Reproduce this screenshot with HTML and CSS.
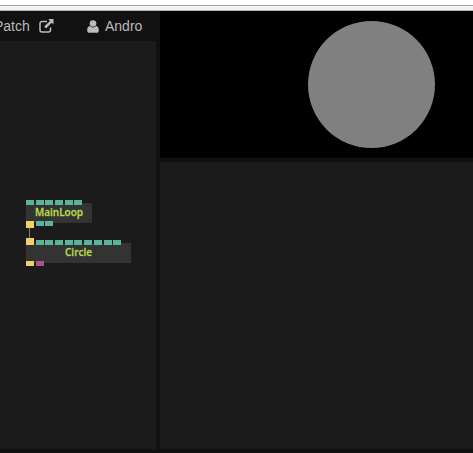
FILE: index.html
```html
<!DOCTYPE html>
<html lang="en">
<head>
<meta charset="utf-8">
<title>Patch editor</title>
<link rel="stylesheet" href="styles.css">
</head>
<body>
<div class="browser-edge"></div>
<main class="workspace">
  <section class="editor">
    <nav class="toolbar">
      <a class="patch"><span class="patch-label">Patch</span>
        <svg class="share" viewBox="0 0 15 14"><path d="M8 2.5H3a2 2 0 0 0-2 2V11a2 2 0 0 0 2 2h6.5a2 2 0 0 0 2-2V8.5" fill="none" stroke="currentColor" stroke-width="1.5"/><path d="M9.3 0H14.5V5.5L12.7 3.8 7 9.4 5.2 7.6 11 1.9z" fill="currentColor"/></svg>
      </a>
      <a class="user">
        <svg class="person" viewBox="0 0 12 13"><circle cx="6" cy="3.5" r="3.3" fill="currentColor"/><path d="M2.8 6.1C.8 6.4.2 8.4.2 10.5.2 12 1 12.8 2.2 12.8h7.6c1.2 0 2-.8 2-2.3 0-2.1-.6-4.1-2.6-4.4a4.5 4.5 0 0 1-6.4 0z" fill="currentColor"/></svg>
        <span class="user-label">Andro</span>
      </a>
    </nav>
    <div class="canvas">
      <div class="wire"></div>
      <div class="op main-loop">
        <div class="ports"><i></i><i></i><i></i><i></i><i></i><i></i></div>
        <div class="title">MainLoop</div>
        <div class="ports out"><i class="render linked"></i><i></i><i></i></div>
      </div>
      <div class="op circle-op">
        <div class="ports"><i class="render linked"></i><i></i><i></i><i></i><i></i><i></i><i></i><i></i><i></i><i></i></div>
        <div class="title">Circle</div>
        <div class="ports out"><i class="render"></i><i class="object"></i></div>
      </div>
    </div>
  </section>
  <section class="side">
    <div class="preview"><div class="disc"></div></div>
    <div class="params"></div>
  </section>
</main>
</body>
</html>
```
FILE: styles.css
```css
* { box-sizing: border-box; }
body {
  margin: 0;
  height: 453px;
  overflow: hidden;
  display: flex;
  flex-direction: column;
  background: #111;
  font-family: "Liberation Sans", Arial, sans-serif;
}
.browser-edge {
  flex: none;
  height: 11px;
  background: linear-gradient(#fff 5px, #aaa 5px 6px, #f1f1f1 6px 10px, #b1b7b4 10px);
}
.workspace {
  flex: 1;
  display: grid;
  grid-template-columns: 156px 1fr;
  column-gap: 4px;
  padding-bottom: 4px;
}
.editor { display: flex; flex-direction: column; min-width: 0; }
.toolbar {
  height: 30px;
  display: flex;
  align-items: center;
  gap: 33px;
  color: #bbb;
  font-size: 14px;
  line-height: 30px;
  overflow: hidden;
}
.patch, .user { display: flex; align-items: center; flex: none; }
.patch { gap: 9px; margin-left: -6px; }
.patch-label { width: 36px; }
.user { gap: 6px; }
.user-label { font-size: 14px; }
.share { width: 15px; height: 14px; }
.person { width: 12px; height: 13px; }
.canvas { position: relative; flex: 1; background: #1b1b1b; }
.op {
  position: absolute;
  left: 26px;
  height: 20px;
  background: #333;
}
.main-loop { top: 162px; width: 66px; }
.circle-op { top: 202px; width: 105px; }
.title {
  text-align: center;
  color: #b7d84b;
  font: 600 10px/19px "Open Sans", sans-serif;
  -webkit-text-stroke: 0.3px #b7d84b;
}
.ports {
  position: absolute;
  left: 0;
  top: -3px;
  display: flex;
  align-items: flex-end;
  height: 5px;
  gap: 1.7px;
}
.ports i { flex: none; width: 8px; height: 5px; background: #5ab39b; }
.ports .render { background: #f0d264; }
.ports .object { background: #a8558f; }
.ports .linked { height: 7px; }
.ports.out { top: 18px; align-items: flex-start; }
.wire {
  position: absolute;
  left: 29px;
  top: 186px;
  width: 1px;
  height: 12px;
  background: #8f8049;
}
.side {
  display: grid;
  grid-template-rows: 147px 1fr;
  row-gap: 4px;
}
.preview { background: #000; padding: 10px 0 0 148px; }
.disc { width: 127px; height: 127px; border-radius: 50%; background: #808080; }
.params { background: #1b1b1b; }
```
